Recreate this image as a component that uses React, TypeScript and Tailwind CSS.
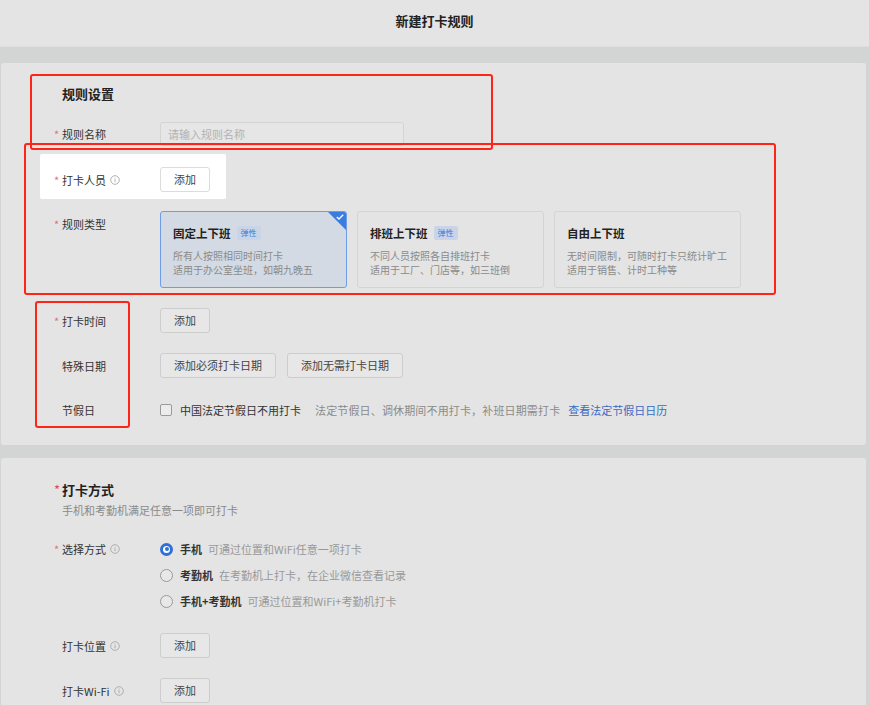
import React from "react";

const Info = () => (
  <svg width="10" height="10" viewBox="0 0 10 10" className="ml-[4px] shrink-0">
    <circle cx="5" cy="5" r="4.3" fill="none" stroke="#a8a8a8" strokeWidth="0.9" />
    <rect x="4.55" y="4.2" width="0.9" height="3" fill="#a8a8a8" />
    <rect x="4.55" y="2.6" width="0.9" height="0.9" fill="#a8a8a8" />
  </svg>
);

function Label({ star, label, info }: { star?: boolean; label: string; info?: boolean }) {
  return (
    <div className="w-[106px] shrink-0 flex items-center text-[11px] leading-[16px] text-[#333]">
      <span className="w-[8px] text-[#e0707a]">{star ? "*" : ""}</span>
      <span>{label}</span>
      {info && <Info />}
    </div>
  );
}

function Btn({ children, white }: { children: React.ReactNode; white?: boolean }) {
  return (
    <div
      className={
        white
          ? "h-[25px] px-[13px] flex items-center border border-[#dcdcdc] rounded-[3px] bg-white text-[11px] text-[#444]"
          : "h-[25px] px-[13px] flex items-center border border-[#cdcdcd] rounded-[3px] bg-[#e7e7e7] text-[11px] text-[#444]"
      }
    >
      {children}
    </div>
  );
}

function TypeCard({
  title,
  tag,
  l1,
  l2,
  selected,
}: {
  title: string;
  tag?: boolean;
  l1: string;
  l2: string;
  selected?: boolean;
}) {
  return (
    <div
      className={
        selected
          ? "relative w-[187px] h-[77px] rounded-[3px] border border-[#6f9ce6] bg-[#d3dae3] overflow-hidden pl-[12px] pt-[13px]"
          : "relative w-[187px] h-[77px] rounded-[3px] border border-[#d4d4d4] bg-[#e4e4e4] overflow-hidden pl-[12px] pt-[13px]"
      }
    >
      <div className="flex items-center h-[16px]">
        <span className="text-[11.5px] font-bold text-[#222] leading-[16px]">{title}</span>
        {tag && (
          <span className="ml-[6px] h-[14px] px-[4px] flex items-center rounded-[2px] bg-[#c9d5e6] text-[8px] text-[#3f7be0] leading-[14px]">
            弹性
          </span>
        )}
      </div>
      <div className="mt-[8px] text-[10px] leading-[14px] text-[#8a8a8a]">
        <div>{l1}</div>
        <div>{l2}</div>
      </div>
      {selected && (
        <div className="absolute top-0 right-0 w-[18px] h-[18px]">
          <div className="w-0 h-0 border-t-[18px] border-l-[18px] border-t-[#3b7ce0] border-l-transparent" />
          <svg width="8" height="6" viewBox="0 0 8 6" className="absolute top-[2px] right-[2px]">
            <path d="M0.8 3 L3 5 L7.2 0.8" fill="none" stroke="#fff" strokeWidth="1.3" />
          </svg>
        </div>
      )}
    </div>
  );
}

function Radio({ checked, title, desc }: { checked?: boolean; title: string; desc: string }) {
  return (
    <div className="h-[26px] flex items-center">
      {checked ? (
        <div className="w-[13px] h-[13px] rounded-full bg-[#2e6fd8] flex items-center justify-center">
          <div className="w-[7px] h-[7px] rounded-full bg-white flex items-center justify-center">
            <div className="w-[4px] h-[4px] rounded-full bg-[#2e6fd8]" />
          </div>
        </div>
      ) : (
        <div className="w-[13px] h-[13px] rounded-full border border-[#9a9a9a] bg-[#e8e8e8]" />
      )}
      <span className="ml-[7px] text-[11px] font-bold text-[#333] leading-[16px]">{title}</span>
      <span className="ml-[6px] text-[11px] text-[#999] leading-[16px]">{desc}</span>
    </div>
  );
}

export default function App() {
  return (
    <div className="relative w-[869px] h-[705px] overflow-hidden bg-[#d3d5d4] font-['Noto_Sans_CJK_SC','Liberation_Sans',sans-serif]">
      <div className="h-[47px] bg-[#e4e4e4] pt-[12px] text-center text-[13px] leading-[18px] font-bold text-[#222] border-b border-[#dedede]">
        新建打卡规则
      </div>

      {/* card 1 */}
      <div className="mt-[16px] ml-[1px] w-[865px] h-[382px] rounded-[3px] bg-[#e4e4e4] pl-[53px] pt-[21px]">
        <div className="pl-[8px] text-[13px] leading-[20px] font-bold text-[#222]">规则设置</div>

        <div className="mt-[18px] flex items-center h-[24px]">
          <Label star label="规则名称" />
          <div className="w-[244px] h-[24px] border border-[#d4d4d4] rounded-[3px] bg-[#e6e6e6] flex items-center pl-[7px] text-[11px] text-[#b2b2b2]">
            请输入规则名称
          </div>
        </div>

        <div className="mt-[8px] -ml-[14px] pl-[14px] pt-[13px] pb-[7px] w-[186px] h-[45px] bg-white rounded-[2px] flex items-center">
          <Label star label="打卡人员" info />
          <Btn white>添加</Btn>
        </div>

        <div className="mt-[12px] flex items-start">
          <div className="pt-[5px]">
            <Label star label="规则类型" />
          </div>
          <div className="flex gap-[10px]">
            <TypeCard selected title="固定上下班" tag l1="所有人按照相同时间打卡" l2="适用于办公室坐班，如朝九晚五" />
            <TypeCard title="排班上下班" tag l1="不同人员按照各自排班打卡" l2="适用于工厂、门店等，如三班倒" />
            <TypeCard title="自由上下班" l1="无时间限制，可随时打卡只统计旷工" l2="适用于销售、计时工种等" />
          </div>
        </div>

        <div className="mt-[20px] flex items-center">
          <Label star label="打卡时间" />
          <Btn>添加</Btn>
        </div>

        <div className="mt-[20px] flex items-center">
          <Label label="特殊日期" />
          <div className="flex gap-[11px]">
            <Btn>添加必须打卡日期</Btn>
            <Btn>添加无需打卡日期</Btn>
          </div>
        </div>

        <div className="mt-[22px] flex items-center h-[20px]">
          <Label label="节假日" />
          <div className="w-[12px] h-[12px] border border-[#9a9a9a] rounded-[2px] bg-[#ececec]" />
          <span className="ml-[8px] text-[11px] leading-[16px] text-[#333]">中国法定节假日不用打卡</span>
          <span className="ml-[14px] text-[11px] leading-[16px] text-[#8a8a8a] tracking-[0.15px]">
            法定节假日、调休期间不用打卡，补班日期需打卡
          </span>
          <span className="ml-[8px] text-[11px] leading-[16px] text-[#3a6bc4]">查看法定节假日日历</span>
        </div>
      </div>

      {/* card 2 */}
      <div className="mt-[13px] ml-[1px] w-[865px] h-[260px] rounded-[3px] bg-[#e4e4e4] pl-[53px] pt-[22px]">
        <div className="flex items-center text-[13px] leading-[20px] font-bold text-[#222]">
          <span className="w-[8px] text-[#e0504f] font-normal">*</span>
          <span>打卡方式</span>
        </div>
        <div className="mt-[2px] pl-[8px] text-[11px] leading-[16px] text-[#8a8a8a]">手机和考勤机满足任意一项即可打卡</div>

        <div className="mt-[18px] flex items-start">
          <div className="pt-[5px]">
            <Label star label="选择方式" info />
          </div>
          <div className="flex flex-col">
            <Radio checked title="手机" desc="可通过位置和WiFi任意一项打卡" />
            <Radio title="考勤机" desc="在考勤机上打卡，在企业微信查看记录" />
            <Radio title="手机+考勤机" desc="可通过位置和WiFi+考勤机打卡" />
          </div>
        </div>

        <div className="mt-[19px] flex items-center">
          <Label label="打卡位置" info />
          <Btn>添加</Btn>
        </div>

        <div className="mt-[20px] flex items-center">
          <Label label="打卡Wi-Fi" info />
          <Btn>添加</Btn>
        </div>
      </div>

      {/* red annotation boxes */}
      <div className="absolute left-[30px] top-[74px] w-[463px] h-[76px] border-[2.5px] border-[#ff2418] rounded-[3px]" />
      <div className="absolute left-[24px] top-[143px] w-[752px] h-[152px] border-[2.5px] border-[#ff2418] rounded-[3px]" />
      <div className="absolute left-[35px] top-[301px] w-[95px] h-[127px] border-[2.5px] border-[#ff2418] rounded-[3px]" />
    </div>
  );
}
